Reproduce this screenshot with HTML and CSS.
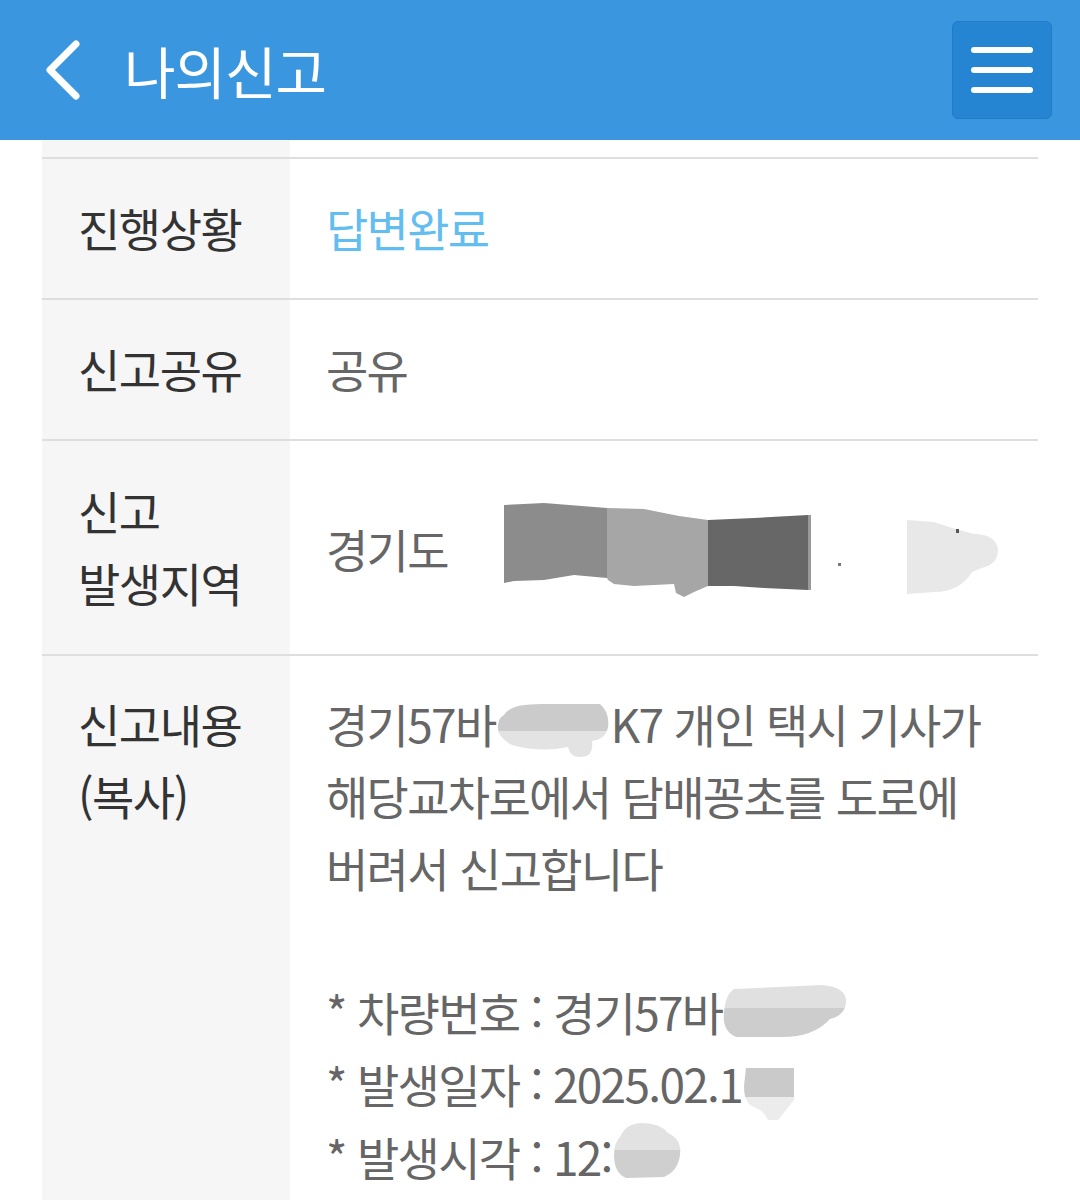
FILE: index.html
```html
<!DOCTYPE html>
<html lang="ko">
<head>
<meta charset="utf-8">
<title>나의신고</title>
<link rel="stylesheet" href="styles.css">
</head>
<body>
<header class="appbar">
  <button class="back" aria-label="뒤로">
    <svg width="44" height="64" viewBox="0 0 44 64"><polyline points="34,6 8,32 34,58" fill="none" stroke="#fff" stroke-width="7" stroke-linecap="round" stroke-linejoin="round"/></svg>
  </button>
  <h1 class="title">나의신고</h1>
  <button class="menu" aria-label="메뉴">
    <span class="bar"></span><span class="bar"></span><span class="bar"></span>
  </button>
</header>

<main class="table">
  <div class="row stub"><div class="cell label"></div><div class="cell value"></div></div>

  <div class="row">
    <div class="cell label">진행상황</div>
    <div class="cell value status">답변완료</div>
  </div>

  <div class="row">
    <div class="cell label">신고공유</div>
    <div class="cell value">공유</div>
  </div>

  <div class="row addr-row">
    <div class="cell label">신고<br>발생지역</div>
    <div class="cell value addr">경기도<svg class="mask-addr" width="500" height="100" viewBox="0 0 500 100">
      <path d="M0,5 L40,3 L103,8 L103,78 L70,75 L40,80 L10,81 L0,83 Z" fill="#8c8c8c"/>
      <path d="M103,8 L140,9 L175,16 L204,20 L204,86 L190,92 L180,97 L172,93 L170,84 L130,86 L110,84 L104,80 L103,78 Z" fill="#a6a6a6"/>
      <path d="M204,20 L250,18 L304,15 L304,90 L260,88 L230,86 L204,86 Z" fill="#676767"/>
      <rect x="304" y="15" width="3" height="75" fill="#9a9a9a"/>
      <rect x="334" y="63" width="3" height="3" fill="#777"/>
      <path d="M403,20 L430,22 L448,28 L470,34 Q492,34 494,50 Q494,64 478,68 L468,72 Q456,92 430,92 L403,94 Z" fill="#e8e8e8"/>
      <rect x="452" y="29" width="3" height="4" fill="#555"/>
    </svg></div>
  </div>

  <div class="row top">
    <div class="cell label">신고내용<br>(복사)</div>
    <div class="cell value content">경기57바<svg class="mask m1" width="115" height="57" viewBox="0 0 115 57">
        <defs><linearGradient id="g1" x1="0" y1="0" x2="0" y2="1"><stop offset="0.5" stop-color="#cbcbcb"/><stop offset="0.5" stop-color="#e3e3e3"/></linearGradient></defs>
        <path d="M8,14 Q14,2 50,3 L104,3 Q114,12 112,26 Q110,38 96,40 Q98,55 86,56 Q74,57 72,46 Q44,52 16,44 Q0,36 2,24 Q3,16 8,14 Z" fill="url(#g1)"/>
      </svg>K7 개인 택시 기사가<br>해당교차로에서 담배꽁초를 도로에<br>버려서 신고합니다<br><br>* 차량번호 : 경기57바<svg class="mask m2" width="125" height="55" viewBox="0 0 125 55">
        <defs><linearGradient id="g2" x1="0" y1="0" x2="0" y2="1"><stop offset="0.45" stop-color="#e0e0e0"/><stop offset="0.45" stop-color="#cdcdcd"/></linearGradient></defs>
        <path d="M12,6 L100,2 Q124,4 124,18 Q124,32 108,36 Q92,54 60,54 L14,54 Q0,48 2,30 Q3,12 12,6 Z" fill="url(#g2)"/>
      </svg><br>* 발생일자 : 2025.02.1<svg class="mask m3" width="55" height="54" viewBox="0 0 55 54">
        <defs><linearGradient id="g3" x1="0" y1="0" x2="0" y2="1"><stop offset="0.55" stop-color="#cacaca"/><stop offset="0.55" stop-color="#ececec"/></linearGradient></defs>
        <path d="M4,2 L52,2 L52,34 Q44,44 36,54 L26,54 Q22,44 10,40 Q2,36 2,20 Z" fill="url(#g3)"/>
      </svg><br>* 발생시각 : 12:<svg class="mask m4" width="70" height="58" viewBox="0 0 70 58">
        <defs><linearGradient id="g4" x1="0" y1="0" x2="0" y2="1"><stop offset="0.5" stop-color="#e2e2e2"/><stop offset="0.5" stop-color="#cfcfcf"/></linearGradient></defs>
        <path d="M8,16 Q14,2 30,2 Q48,2 56,12 Q70,18 68,34 Q66,50 52,56 L14,57 Q2,52 2,34 Q2,22 8,16 Z" fill="url(#g4)"/>
      </svg></div>
  </div>
</main>
</body>
</html>
```

FILE: styles.css
```css
* { box-sizing: border-box; }

html, body {
  margin: 0;
  padding: 0;
  background: #ffffff;
  font-family: "Noto Sans CJK KR", "Noto Sans", sans-serif;
}

.appbar {
  height: 140px;
  background: #3a97df;
  display: flex;
  align-items: center;
  padding: 0 28px 0 42px;
}

.back {
  background: none;
  border: 0;
  padding: 0;
  width: 44px;
  height: 64px;
  display: flex;
  cursor: pointer;
}

.title {
  margin: 0 0 0 38px;
  color: #ffffff;
  font-size: 56px;
  font-weight: 400;
  letter-spacing: -1px;
  line-height: 1;
}

.menu {
  margin-left: auto;
  width: 100px;
  height: 98px;
  background: #2585d3;
  border: 1px solid #1f7cc9;
  border-radius: 6px;
  display: flex;
  flex-direction: column;
  align-items: center;
  justify-content: center;
  gap: 14px;
  padding: 0;
}

.menu .bar {
  display: block;
  width: 62px;
  height: 6px;
  border-radius: 3px;
  background: #ffffff;
}

.table {
  margin: 0 42px;
}

.row {
  display: grid;
  grid-template-columns: 248px 1fr;
  border-bottom: 2px solid #dedede;
}

.cell {
  padding: 32px 36px 35px;
  font-size: 46px;
  line-height: 72px;
  display: flex;
  flex-direction: column;
  justify-content: center;
}

.addr-row .cell {
  padding-top: 33px;
  padding-bottom: 36px;
}

.row.top .cell {
  justify-content: flex-start;
  padding-top: 31px;
  padding-bottom: 60px;
}

.stub .cell {
  height: 17px;
  padding: 0;
}

.label {
  background: #f6f6f6;
  color: #333333;
  letter-spacing: -1.5px;
}

.value {
  color: #666666;
  letter-spacing: -1.7px;
}

.value.status {
  color: #62bdf0;
}

.value.addr {
  display: block;
  align-self: center;
  white-space: nowrap;
  padding-top: 0;
  padding-bottom: 0;
}

.mask-addr {
  vertical-align: -12px;
  margin-left: 56px;
  margin-top: -70px;
  margin-bottom: -20px;
}

.content {
  display: block;
  white-space: nowrap;
}

.mask {
  display: inline-block;
}

.m1 { vertical-align: -15px; margin-top: -50px; }
.m2 { vertical-align: -7px;  margin-top: -50px; }
.m3 { vertical-align: -17px; margin-top: -48px; }
.m4 { vertical-align: -3px;  margin-top: -52px; }
```
